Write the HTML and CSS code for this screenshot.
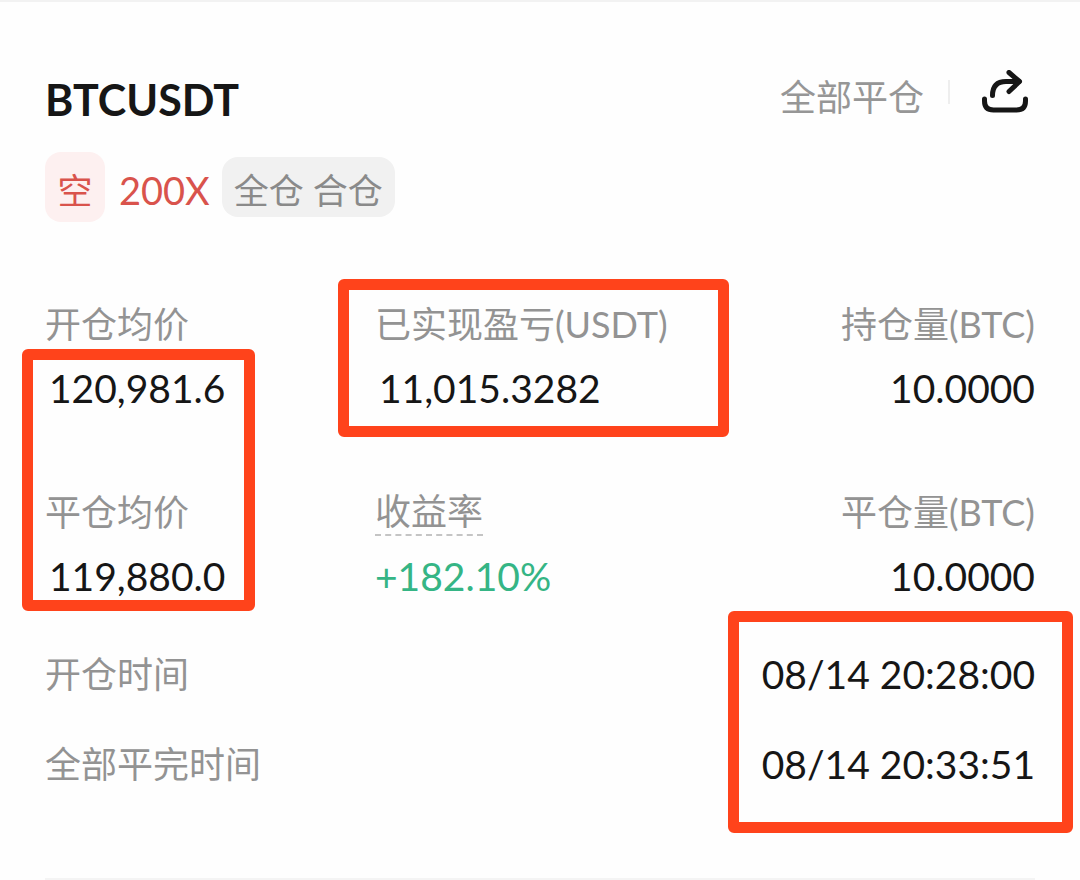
FILE: index.html
```html
<!DOCTYPE html>
<html lang="zh-CN">
<head>
    <meta charset="UTF-8">
    <meta name="viewport" content="width=device-width, initial-scale=1.0">
    <title>BTCUSDT 仓位历史</title>
    <link rel="stylesheet" href="styles.css">
</head>
<body>
    <main class="position">
        <header class="header">
            <h1>BTCUSDT</h1>
            <div class="actions">
                <span class="status">全部平仓</span>
                <span class="divider"></span>
                <button class="share" type="button" aria-label="分享">
                    <svg viewBox="0 0 46 44" width="46" height="44" fill="none" stroke="#161616" stroke-width="5" stroke-linecap="round" stroke-linejoin="round">
                        <path d="M10.5 25.5C10.5 16.500 15 11.500 24 11.500H37"/>
                        <path d="M27 2.500L37.500 11.500L27 21.500"/>
                        <path d="M2.500 29V31Q2.500 40 11.500 40H34.500Q43.500 40 43.500 31V29"/>
                    </svg>
                </button>
            </div>
        </header>

        <div class="tags">
            <span class="side">空</span>
            <span class="leverage">200X</span>
            <span class="mode">全仓 合仓</span>
        </div>

        <section class="stats">
            <div class="column">
                <div class="stat">
                    <div class="label">开仓均价</div>
                    <div class="value inset">120,981.6</div>
                </div>
                <div class="stat">
                    <div class="label">平仓均价</div>
                    <div class="value inset">119,880.0</div>
                </div>
                <div class="mark mark-price"></div>
            </div>
            <div class="column">
                <div class="stat">
                    <div class="label">已实现盈亏(USDT)</div>
                    <div class="value inset">11,015.3282</div>
                    <div class="mark mark-profit"></div>
                </div>
                <div class="stat">
                    <div class="label tip">收益率</div>
                    <div class="value up">+182.10%</div>
                </div>
            </div>
            <div class="column right">
                <div class="stat">
                    <div class="label">持仓量(BTC)</div>
                    <div class="value">10.0000</div>
                </div>
                <div class="stat">
                    <div class="label">平仓量(BTC)</div>
                    <div class="value">10.0000</div>
                </div>
            </div>
        </section>

        <section class="times">
            <div class="column">
                <div class="label">开仓时间</div>
                <div class="label">全部平完时间</div>
            </div>
            <div class="column right">
                <time class="value">08/14 20:28:00</time>
                <time class="value">08/14 20:33:51</time>
                <div class="mark mark-time"></div>
            </div>
        </section>
    </main>
</body>
</html>
```
FILE: styles.css
```css
* {
    box-sizing: border-box;
}
body {
    margin: 0;
    background: #fefefe;
    border-top: 2px solid #f2f2f2;
    color: #161616;
    font-family: Lato, 'Noto Sans CJK SC', sans-serif;
}
.position {
    margin: 0 45px;
    padding: 68px 0 90px;
    border-bottom: 3px solid #f4f4f4;
}

/* 标题栏 */
.header {
    display: flex;
    justify-content: space-between;
    align-items: flex-start;
}
h1 {
    margin: 0;
    font-size: 43px;
    line-height: 60px;
    font-weight: 700;
}
.actions {
    display: flex;
    align-items: flex-start;
    padding-right: 7px;
}
.status {
    font-size: 36px;
    line-height: 54px;
    color: #969696;
}
.divider {
    width: 2px;
    height: 24px;
    margin: 10px 32px 0 24px;
    background: #eeeeee;
}
.share {
    padding: 0;
    border: none;
    background: none;
    cursor: pointer;
}
.share svg {
    display: block;
}

/* 标签 */
.tags {
    display: flex;
    align-items: center;
    margin-top: 22px;
    font-size: 35px;
}
.side {
    width: 60px;
    padding-top: 6px;
    line-height: 64px;
    border-radius: 16px;
    background: #fdf0f0;
    color: #d9534c;
    text-align: center;
}
.leverage {
    margin: 0 12px 0 14px;
    padding-top: 6px;
    font-size: 38px;
    color: #d9534c;
}
.mode {
    padding: 6px 12px 0;
    line-height: 54px;
    border-radius: 16px;
    background: #f1f1f1;
    color: #8a8a8a;
}

/* 数据 */
.stats {
    display: grid;
    grid-template-columns: repeat(3, 1fr);
    margin-top: 78px;
}
.column {
    position: relative;
    display: flex;
    flex-direction: column;
    gap: 76px;
    white-space: nowrap;
}
.right {
    text-align: right;
    align-items: flex-end;
}
.stat {
    position: relative;
}
.label {
    font-size: 36px;
    line-height: 48px;
    color: #939393;
}
.value {
    font-size: 39px;
    line-height: 48px;
    font-variant-numeric: tabular-nums;
}
.stat .value {
    margin-top: 16px;
}
.inset {
    padding-left: 4px;
}
.tip {
    width: fit-content;
    line-height: 46px;
    border-bottom: 2px dashed #c4c4c4;
}
.up {
    color: #35b585;
}
.times {
    display: flex;
    justify-content: space-between;
    margin-top: 50px;
}
.times .column {
    gap: 42px;
}

/* 红色标注框 */
.mark {
    position: absolute;
    border: 11px solid #ff431b;
    border-radius: 6px;
    pointer-events: none;
}
.mark-price {
    top: 49px;
    left: -23px;
    width: 233px;
    bottom: -11px;
}
.mark-profit {
    top: -21px;
    left: -37px;
    width: 391px;
    bottom: -25px;
}
.mark-time {
    top: -39px;
    right: -38px;
    width: 345px;
    bottom: -45px;
}
```
